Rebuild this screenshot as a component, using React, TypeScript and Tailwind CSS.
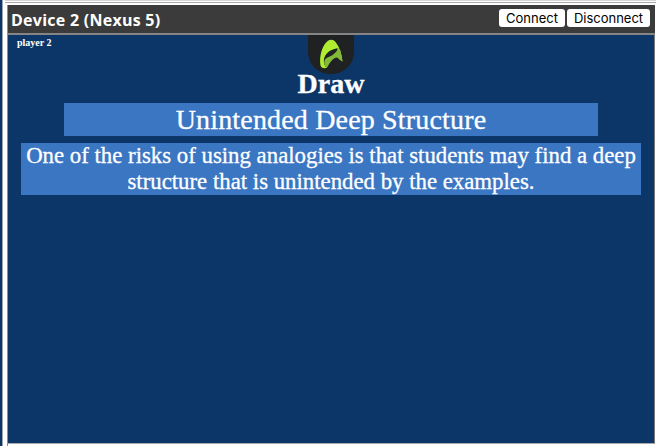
function Logo() {
  return (
    <div className="flex h-[39px] w-[46px] justify-center rounded-b-[22px] bg-[#202122]">
      <svg viewBox="0 0 46 39" className="h-[39px] w-[46px]">
        <path d="M12.500 30.500C11 22 14 10 20 5.800C22.500 4.300 25.500 4.500 27.500 7C31.500 12 33.800 19 34.500 26.500L31 24L29.500 13.500C24 14 17.500 18 16 24C15.300 28 16.500 31 19 32.800C16 33.800 13.300 33 12.500 30.500Z" fill="#b0ed31" />
        <path d="M19 32.800C15 30 15.500 24 19.500 22.500C24 21 28 18 30 13L32.500 15.500L34.500 26.500L29 22.500C25.500 22.500 22 27 19 32.800Z" fill="#82b936" />
        <path d="M16.500 24.500C17 17.500 23 14.500 29.500 13.500C28.500 18 24 20 20.500 21C18.500 21.700 17.500 22.500 16.500 24.500Z" fill="#202122" />
      </svg>
    </div>
  );
}

export default function App() {
  return (
    <div className="flex h-[446px] w-[656px] overflow-hidden bg-white">
      <div className="w-[3px] shrink-0 border-r border-[#9da5b1] bg-[#0d3668]" />
      <div className="w-1 shrink-0" />
      <div className="flex w-[649px] flex-col">
        <div className="-ml-0.5 h-[3px] border-b border-[#a9a9a9]"><div className="h-px bg-[#d4d4d4]" /></div>
        <div className="mt-0.5 flex h-[441px] w-[648px] flex-col border-l border-[#8d8d8d]">
          <header className="flex h-[28px] shrink-0 items-start justify-between bg-[#3b3b3b] pl-[3px] pr-[5px]">
            <h1 className="whitespace-nowrap pt-[3px] font-['Open_Sans',sans-serif] text-[16px] font-bold leading-[24px] tracking-[0.26px] text-white">Device 2 (Nexus 5)</h1>
            <div className="flex gap-[2px] pt-[4px] font-[Inter,sans-serif] text-[13px] leading-[19px] text-black">
              <button className="h-[18px] w-[66px] rounded-[3px] bg-white">Connect</button>
              <button className="h-[18px] w-[83px] rounded-[3px] bg-white">Disconnect</button>
            </div>
          </header>
          <main className="flex h-[411px] w-[647px] flex-col border-b border-r border-t-2 border-b-[#a9a9a9] border-r-[#777] border-t-[#858585] bg-[#0d3668] font-['Liberation_Serif',serif] text-white">
            <div className="grid h-[67px] shrink-0 grid-cols-[1fr_46px_1fr]">
              <span className="pl-[9px] pt-px text-[10px] font-bold leading-[14px]">player 2</span>
              <div className="flex flex-col items-center">
                <Logo />
                <h2 className="-mt-[6px] text-[28px] font-bold leading-[32px] [-webkit-text-stroke:0.3px_white]">Draw</h2>
              </div>
            </div>
            <div className="ml-[56px] mt-px h-[33px] w-[534px] shrink-0 whitespace-nowrap bg-[#3b76c3] text-center text-[28px] leading-[34px] tracking-[0.17px] [-webkit-text-stroke:0.3px_white]">Unintended Deep Structure</div>
            <p className="ml-[13px] mt-[7px] h-[52px] w-[620px] shrink-0 whitespace-nowrap bg-[#3b76c3] text-center text-[22.800px] leading-[26px] [-webkit-text-stroke:0.3px_white]">
              One of the risks of using analogies is that students may find a deep<br />
              structure that is unintended by the examples.
            </p>
          </main>
        </div>
      </div>
    </div>
  );
}
